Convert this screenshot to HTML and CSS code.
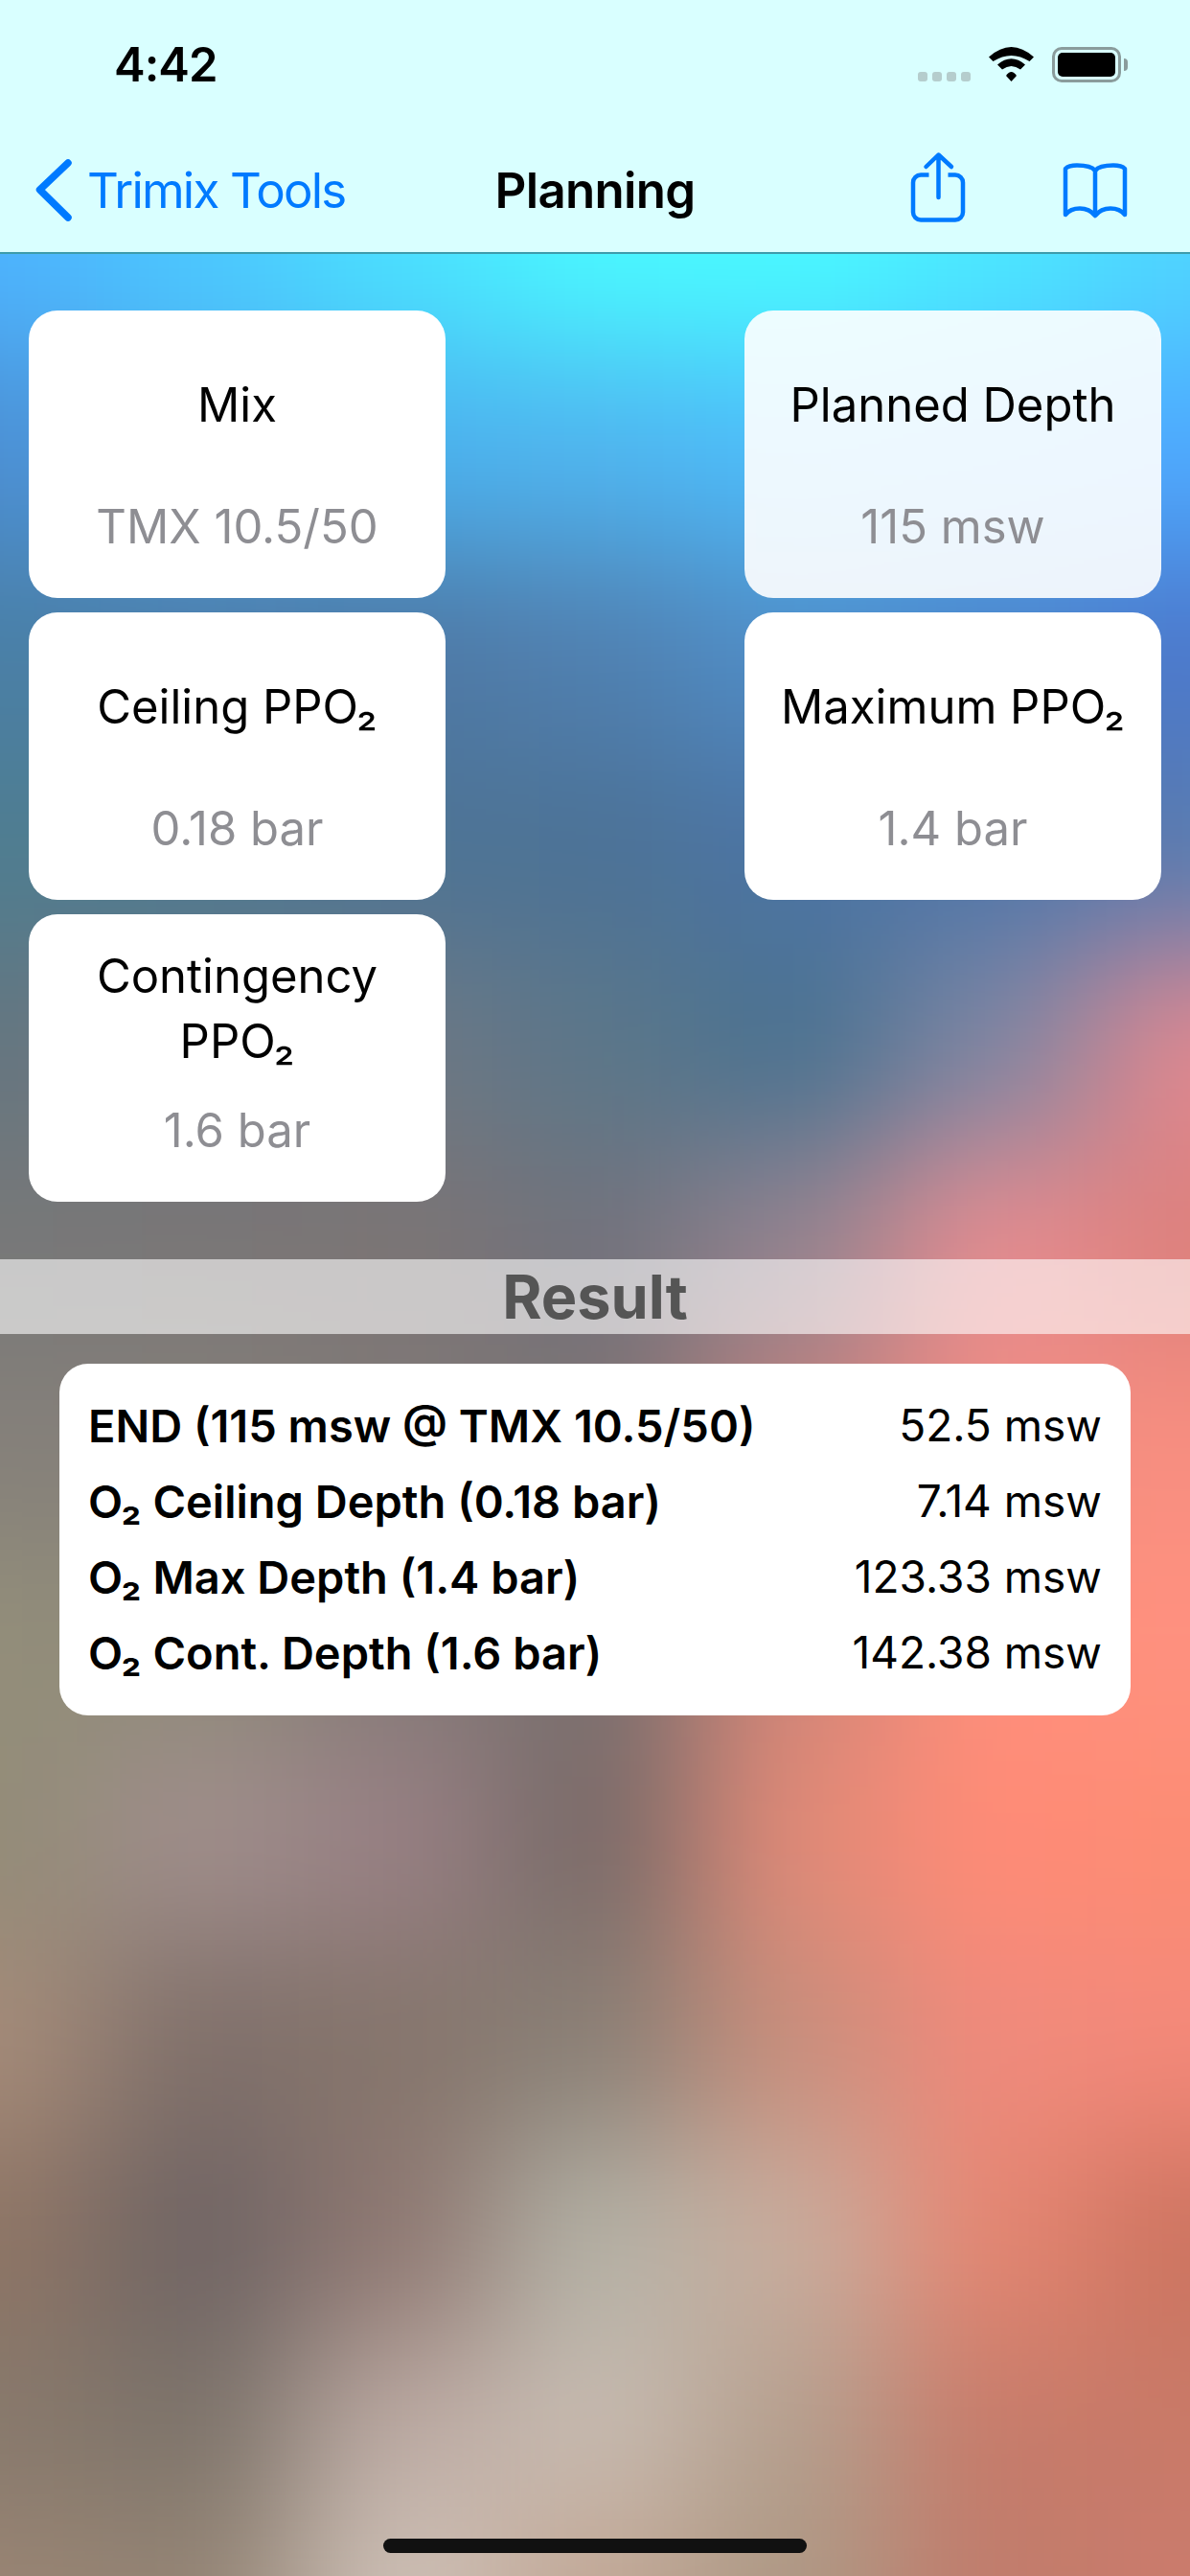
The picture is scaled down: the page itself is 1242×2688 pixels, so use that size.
FILE: index.html
```html
<!DOCTYPE html>
<html>
  <head>
    <meta charset="utf-8">
    <meta name="viewport" content="width=device-width, initial-scale=1">
    <title>Planning</title>
    <link rel="stylesheet" href="styles.css">
  </head>
  <body>
    <svg class="backdrop" width="1242" height="2688" viewBox="0 0 1242 2688">
      <defs>
        <filter id="soft" filterUnits="userSpaceOnUse" x="-300" y="-300" width="1842" height="3288" color-interpolation-filters="sRGB">
          <feGaussianBlur stdDeviation="70"/>
        </filter>
      </defs>
      <g filter="url(#soft)">
        <rect x="-200" y="-200" width="304" height="568" fill="#4db4ff"/><rect x="104" y="-200" width="207" height="568" fill="#4cc8ff"/><rect x="311" y="-200" width="207" height="568" fill="#4be0ff"/><rect x="518" y="-200" width="207" height="568" fill="#4af8ff"/><rect x="725" y="-200" width="207" height="568" fill="#4afaff"/><rect x="932" y="-200" width="207" height="568" fill="#4ce8ff"/><rect x="1139" y="-200" width="311" height="568" fill="#4fd4ff"/>
        <rect x="-200" y="368" width="304" height="207" fill="#4c8fd4"/><rect x="104" y="368" width="207" height="207" fill="#4ca5e8"/><rect x="311" y="368" width="207" height="207" fill="#4bb0ee"/><rect x="518" y="368" width="207" height="207" fill="#50b4f0"/><rect x="725" y="368" width="207" height="207" fill="#4dbcfb"/><rect x="932" y="368" width="207" height="207" fill="#4cb4ff"/><rect x="1139" y="368" width="311" height="207" fill="#4ea8ff"/>
        <rect x="-200" y="575" width="304" height="207" fill="#4a7fa6"/><rect x="104" y="575" width="207" height="207" fill="#4d7ca8"/><rect x="311" y="575" width="207" height="207" fill="#4f78a4"/><rect x="518" y="575" width="207" height="207" fill="#5080b0"/><rect x="725" y="575" width="207" height="207" fill="#508ec8"/><rect x="932" y="575" width="207" height="207" fill="#4f84c8"/><rect x="1139" y="575" width="311" height="207" fill="#4c78cc"/>
        <rect x="-200" y="782" width="304" height="207" fill="#4f7d90"/><rect x="104" y="782" width="207" height="207" fill="#4e7a92"/><rect x="311" y="782" width="207" height="207" fill="#4e7494"/><rect x="518" y="782" width="207" height="207" fill="#4c7296"/><rect x="725" y="782" width="207" height="207" fill="#4c74a4"/><rect x="932" y="782" width="207" height="207" fill="#4f76aa"/><rect x="1139" y="782" width="311" height="207" fill="#5a7cb0"/>
        <rect x="-200" y="989" width="304" height="207" fill="#667680"/><rect x="104" y="989" width="207" height="207" fill="#6b7780"/><rect x="311" y="989" width="207" height="207" fill="#6e7884"/><rect x="518" y="989" width="207" height="207" fill="#5c7789"/><rect x="725" y="989" width="207" height="207" fill="#4a7290"/><rect x="932" y="989" width="207" height="207" fill="#7f86a2"/><rect x="1139" y="989" width="311" height="207" fill="#e08890"/>
        <rect x="-200" y="1196" width="304" height="207" fill="#787878"/><rect x="104" y="1196" width="207" height="207" fill="#7a7676"/><rect x="311" y="1196" width="207" height="207" fill="#7c7474"/><rect x="518" y="1196" width="207" height="207" fill="#72727c"/><rect x="725" y="1196" width="207" height="207" fill="#948490"/><rect x="932" y="1196" width="207" height="207" fill="#e68c90"/><rect x="1139" y="1196" width="311" height="207" fill="#dc807c"/>
        <rect x="-200" y="1403" width="304" height="207" fill="#85807a"/><rect x="104" y="1403" width="207" height="207" fill="#85807a"/><rect x="311" y="1403" width="207" height="207" fill="#807a78"/><rect x="518" y="1403" width="207" height="207" fill="#7c7272"/><rect x="725" y="1403" width="207" height="207" fill="#c0807c"/><rect x="932" y="1403" width="207" height="207" fill="#f08c82"/><rect x="1139" y="1403" width="311" height="207" fill="#f88e80"/>
        <rect x="-200" y="1610" width="304" height="207" fill="#938e7a"/><rect x="104" y="1610" width="207" height="207" fill="#8f8a7a"/><rect x="311" y="1610" width="207" height="207" fill="#857a78"/><rect x="518" y="1610" width="207" height="207" fill="#7a7070"/><rect x="725" y="1610" width="207" height="207" fill="#d08578"/><rect x="932" y="1610" width="207" height="207" fill="#ff8f7c"/><rect x="1139" y="1610" width="311" height="207" fill="#ff917f"/>
        <rect x="-200" y="1817" width="304" height="207" fill="#938c78"/><rect x="104" y="1817" width="207" height="207" fill="#a08e8c"/><rect x="311" y="1817" width="207" height="207" fill="#988084"/><rect x="518" y="1817" width="207" height="207" fill="#786a68"/><rect x="725" y="1817" width="207" height="207" fill="#e08a78"/><rect x="932" y="1817" width="207" height="207" fill="#ff8b76"/><rect x="1139" y="1817" width="311" height="207" fill="#fc8c74"/>
        <rect x="-200" y="2024" width="304" height="207" fill="#a58b79"/><rect x="104" y="2024" width="207" height="207" fill="#80706a"/><rect x="311" y="2024" width="207" height="207" fill="#85756c"/><rect x="518" y="2024" width="207" height="207" fill="#8a8076"/><rect x="725" y="2024" width="207" height="207" fill="#c88e7c"/><rect x="932" y="2024" width="207" height="207" fill="#f08a7c"/><rect x="1139" y="2024" width="311" height="207" fill="#f4897a"/>
        <rect x="-200" y="2231" width="304" height="207" fill="#8e7565"/><rect x="104" y="2231" width="207" height="207" fill="#6f6464"/><rect x="311" y="2231" width="207" height="207" fill="#8f7872"/><rect x="518" y="2231" width="207" height="207" fill="#b4b2a6"/><rect x="725" y="2231" width="207" height="207" fill="#c8ad9e"/><rect x="932" y="2231" width="207" height="207" fill="#e48672"/><rect x="1139" y="2231" width="311" height="207" fill="#cc7460"/>
        <rect x="-200" y="2438" width="304" height="177" fill="#87796c"/><rect x="104" y="2438" width="207" height="177" fill="#7c736a"/><rect x="311" y="2438" width="207" height="177" fill="#bcaaa3"/><rect x="518" y="2438" width="207" height="177" fill="#c8bcb2"/><rect x="725" y="2438" width="207" height="177" fill="#b49f8e"/><rect x="932" y="2438" width="207" height="177" fill="#c67b6a"/><rect x="1139" y="2438" width="311" height="177" fill="#c87a68"/>
        <rect x="-200" y="2615" width="304" height="285" fill="#9a8574"/><rect x="104" y="2615" width="207" height="285" fill="#958575"/><rect x="311" y="2615" width="207" height="285" fill="#cfc2b8"/><rect x="518" y="2615" width="207" height="285" fill="#c2a795"/><rect x="725" y="2615" width="207" height="285" fill="#ad9884"/><rect x="932" y="2615" width="207" height="285" fill="#c07c6c"/><rect x="1139" y="2615" width="311" height="285" fill="#cb7b6d"/>
      </g>
    </svg>
    <div class="screen">
      <header class="top-bar">
        <div class="status-bar">
          <span class="clock">4:42</span>
          <div class="status-icons">
            <div class="signal"><i></i><i></i><i></i><i></i></div>
            <svg class="wifi" width="47" height="36" viewBox="0 0 47 36">
              <path d="M0 10.500Q23.500-10.500 47 10.500L42.500 15Q23.500 3 4.500 15Z"/>
              <path d="M9 18.500Q23.500 6 38 18.500L33 23.500Q23.500 16.500 14 23.500Z"/>
              <path d="M18 30Q23.500 22 29 30L23.500 36Z"/>
            </svg>
            <div class="battery"><div class="battery-level"></div></div>
          </div>
        </div>
        <nav class="nav-bar">
          <a class="back-link">
            <svg width="38" height="66" viewBox="0 0 38 66">
              <path d="M34 5L4.500 33L34 62" fill="none" stroke="#007aff" stroke-width="7.500" stroke-linecap="round" stroke-linejoin="round"/>
            </svg>
            <span>Trimix Tools</span>
          </a>
          <h1 class="nav-title">Planning</h1>
          <div class="nav-actions">
            <svg class="share-icon" width="60" height="76" viewBox="0 0 60 76">
              <path d="M19.500 24.500H11a8 8 0 0 0-8 8V63.500a8 8 0 0 0 8 8H47a8 8 0 0 0 8-8V32.500a8 8 0 0 0-8-8H39.500"/>
              <path d="M29.500 48V4M16.500 16L29.500 3.500L43 16" stroke-linecap="round" stroke-linejoin="round"/>
            </svg>
            <svg class="book-icon" width="70" height="62" viewBox="0 0 70 62">
              <path d="M35 10C31 5 22 4.500 16 4.500C10 4.500 6 6 4 8V56C8 51 14 49.500 19 49.500C26 49.500 31 52 35 57V10Z" stroke-linejoin="round"/>
              <path d="M35 10C39 5 48 4.500 54 4.500C60 4.500 64 6 66 8V56C62 51 56 49.500 51 49.500C44 49.500 39 52 35 57" stroke-linejoin="round"/>
            </svg>
          </div>
        </nav>
      </header>

      <section class="inputs">
        <div class="input-card">
          <div class="input-title">Mix</div>
          <div class="input-value">TMX 10.5/50</div>
        </div>
        <div class="input-card input-card-focus">
          <div class="input-title">Planned Depth</div>
          <div class="input-value">115 msw</div>
        </div>
        <div class="input-card">
          <div class="input-title">Ceiling PPO₂</div>
          <div class="input-value">0.18 bar</div>
        </div>
        <div class="input-card">
          <div class="input-title">Maximum PPO₂</div>
          <div class="input-value">1.4 bar</div>
        </div>
        <div class="input-card">
          <div class="input-title">Contingency<br>PPO₂</div>
          <div class="input-value">1.6 bar</div>
        </div>
      </section>

      <h2 class="result-band">Result</h2>

      <section class="result-card">
        <div class="result-row"><b>END (115 msw @ TMX 10.5/50)</b><span>52.5 msw</span></div>
        <div class="result-row"><b>O₂ Ceiling Depth (0.18 bar)</b><span>7.14 msw</span></div>
        <div class="result-row"><b>O₂ Max Depth (1.4 bar)</b><span>123.33 msw</span></div>
        <div class="result-row"><b>O₂ Cont. Depth (1.6 bar)</b><span>142.38 msw</span></div>
      </section>

      <div class="home-indicator"></div>
    </div>
  </body>
</html>
```

FILE: styles.css
```css
html, body {
  margin: 0;
  width: 1242px;
  height: 2688px;
  overflow: hidden;
  font-family: Inter, "Noto Sans", sans-serif;
  background-color: #8a7f7a;
}

/* blurred wallpaper behind everything */
.backdrop {
  position: absolute;
  top: 0;
  left: 0;
}

.screen {
  position: relative;
  display: flex;
  flex-direction: column;
  height: 2688px;
}

.top-bar {
  background-color: #d9ffff;
  border-bottom: 2px solid #3d9cab;
  height: 265px;
  box-sizing: border-box;
}

.status-bar {
  height: 132px;
  display: flex;
  justify-content: space-between;
  padding: 0 72px 0 119px;
  box-sizing: border-box;
}

.clock {
  margin-top: 34px;
  font-size: 49px;
  line-height: 68px;
  font-weight: 600;
  letter-spacing: -1px;
  color: #000;
}

.status-icons {
  display: flex;
  align-items: flex-start;
  padding-top: 49px;
}

.signal {
  display: flex;
  gap: 5px;
  margin-top: 26px;
  margin-right: 19px;
}

.signal i {
  width: 10px;
  height: 10px;
  border-radius: 3px;
  background-color: #b5cdcd;
}

.wifi {
  margin-right: 19px;
}

.battery {
  position: relative;
  width: 72px;
  height: 37px;
  padding: 3px;
  box-sizing: border-box;
  border: 3px solid #8a9c9c;
  border-radius: 10px;
}

.battery::after {
  content: "";
  position: absolute;
  right: -10px;
  top: 9px;
  width: 4px;
  height: 13px;
  border-radius: 0 7px 7px 0;
  background-color: #8a9c9c;
}

.battery-level {
  height: 100%;
  border-radius: 5px;
  background-color: #000;
}

.nav-bar {
  display: grid;
  grid-template-columns: 1fr auto 1fr;
  align-items: center;
  height: 132px;
}

.back-link {
  display: flex;
  align-items: center;
  gap: 16px;
  padding-left: 37px;
  color: #007aff;
  font-size: 51px;
  letter-spacing: -1.800px;
}

.nav-title {
  margin: 0;
  font-size: 51px;
  font-weight: 600;
  letter-spacing: -.7px;
  color: #000;
}

.nav-actions {
  display: flex;
  justify-content: flex-end;
  align-items: center;
  gap: 98px;
  padding-right: 64px;
}

.nav-actions svg {
  fill: none;
  stroke: #007aff;
  stroke-width: 4.500;
}

.share-icon {
  margin-bottom: 4px;
}

.book-icon {
  margin-top: 2px;
}

.inputs {
  display: grid;
  grid-template-columns: 435px 435px;
  justify-content: space-between;
  row-gap: 15px;
  padding: 59px 30px 0;
}

.input-card {
  height: 300px;
  background-color: #fff;
  border-radius: 30px;
  text-align: center;
  overflow: hidden;
}

.input-card-focus {
  background-color: rgba(255,255,255,.9);
}

.input-title {
  display: flex;
  align-items: center;
  justify-content: center;
  height: 198px;
  font-size: 49px;
  line-height: 68px;
  color: #000;
}

.input-value {
  margin-top: 2px;
  font-size: 49px;
  line-height: 52px;
  color: #8e8e93;
}

.result-band {
  margin: 60px 0 0;
  height: 78px;
  background-color: rgba(255,255,255,.6);
  text-align: center;
  font-size: 63px;
  line-height: 78px;
  font-weight: 700;
  color: #555;
}

.result-card {
  margin: 31px 62px 0;
  padding: 25px 30px;
  height: 367px;
  box-sizing: border-box;
  background-color: #fff;
  border-radius: 30px;
}

.result-row {
  display: flex;
  justify-content: space-between;
  height: 79px;
  line-height: 79px;
  font-size: 46px;
  color: #000;
}

.result-row b {
  font-size: 47px;
  font-weight: 600;
}

.home-indicator {
  align-self: center;
  margin-top: auto;
  margin-bottom: 24px;
  width: 442px;
  height: 15px;
  border-radius: 8px;
  background-color: #111;
}
```
